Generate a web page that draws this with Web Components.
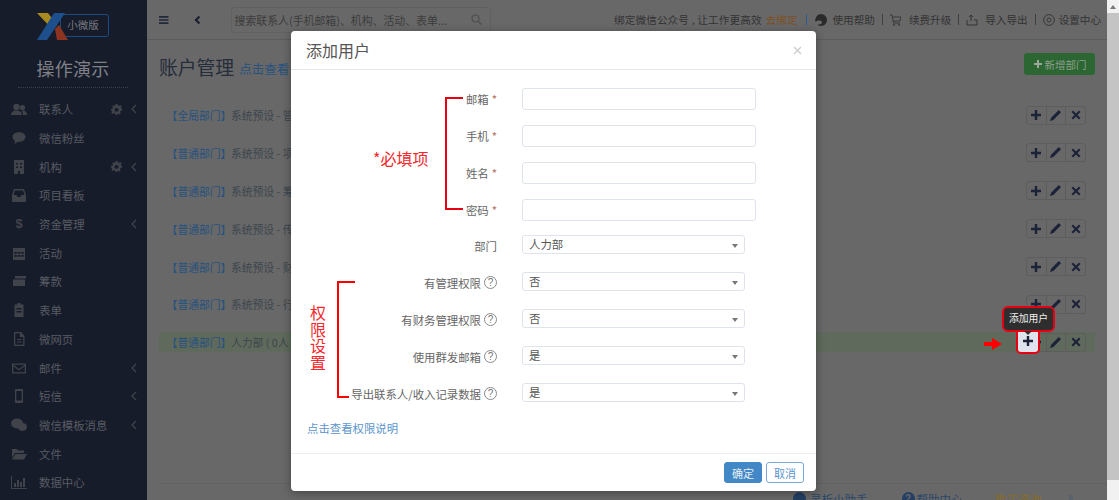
<!DOCTYPE html>
<html lang="zh"><head><meta charset="utf-8"><title>账户管理</title>
<style>
html,body{margin:0;padding:0;height:500px;overflow:hidden;background:#686868;font-family:"Noto Sans CJK SC","Liberation Sans",sans-serif;}
</style></head><body>
<x-app>
  <x-sidebar slot="side">
    <x-nav label="联系人" gear arrow><svg viewBox="0 0 16 16"><circle cx="5.500" cy="6" r="3.200"/><circle cx="11.500" cy="6.500" r="2.600"/><path d="M0 14c0-3 2-4.500 5.500-4.500S11 11 11 14zM12 14c0-2-.5-3.200-1.800-4.200C13.500 9 16 10.500 16 14z"/></svg></x-nav>
    <x-nav label="微信粉丝"><svg viewBox="0 0 16 16"><ellipse cx="8" cy="7" rx="6.500" ry="4.800"/><path d="M4 10 3.500 14l4.500-3z"/></svg></x-nav>
    <x-nav label="机构" gear arrow><svg viewBox="0 0 16 16"><path d="M3 1h10v14H3zM5 4v1.500h2V4zm4 0v1.500h2V4zM5 7.500V9h2V7.500zm4 0V9h2V7.500zM7 12v3h2v-3z" fill-rule="evenodd"/></svg></x-nav>
    <x-nav label="项目看板"><svg viewBox="0 0 16 16"><path d="M3 2h10l2 6v6a1 1 0 0 1-1 1H2a1 1 0 0 1-1-1V8zm1 1.500L2.500 8h3l1 2h3l1-2h3L12 3.500z" fill-rule="evenodd"/></svg></x-nav>
    <x-nav label="资金管理" arrow><span style="font:600 13px 'Liberation Sans';line-height:16px;display:block;text-align:center">$</span></x-nav>
    <x-nav label="活动"><svg viewBox="0 0 16 16"><path d="M2 3h12v12H2zm1.300 4v1.800h2.500V7zm3.400 0v1.800h2.600V7zm3.500 0v1.800h2.500V7zm-6.900 3v1.800h2.500V10zm3.400 0v1.800h2.600V10zm3.500 0v1.800h2.500V10z" fill-rule="evenodd"/></svg></x-nav>
    <x-nav label="筹款"><svg viewBox="0 0 16 16"><path d="M4 3h11v2.500H4zM2 6.500h11a1 1 0 0 1 1 1V13H2z"/></svg></x-nav>
    <x-nav label="表单"><svg viewBox="0 0 16 16"><path d="M3.500 2.500h3V1h3v1.500h3V15h-9zM5.500 6v1.500h5V6zm0 3v1.500h5V9z" fill-rule="evenodd"/></svg></x-nav>
    <x-nav label="微网页"><svg viewBox="0 0 16 16"><path d="M3 1h7l3.500 4v10H3zm1.300 1.300v11.400h7.900V6H9V2.300zM6 8h4.500v1H6zm0 2.500h4.500v1H6z" fill-rule="evenodd"/></svg></x-nav>
    <x-nav label="邮件" arrow><svg viewBox="0 0 16 16"><path d="M1 3.500h14v10H1zm1.300 1.200L8 9l5.700-4.300zm0 1.500v6h11.400v-6L8 10.500z" fill-rule="evenodd"/></svg></x-nav>
    <x-nav label="短信" arrow><svg viewBox="0 0 16 16"><path d="M5 1h6a1 1 0 0 1 1 1v12a1 1 0 0 1-1 1H5a1 1 0 0 1-1-1V2a1 1 0 0 1 1-1zm.300 2v9.500h5.400V3z" fill-rule="evenodd"/></svg></x-nav>
    <x-nav label="微信模板消息" arrow><svg viewBox="0 0 16 16"><ellipse cx="6" cy="6.500" rx="6" ry="5"/><ellipse cx="11.500" cy="10" rx="4.500" ry="4"/></svg></x-nav>
    <x-nav label="文件"><svg viewBox="0 0 16 16"><path d="M1 3h5l1 1.500h6V7H4L1 12zM4.500 8H16l-3 5.500H1z"/></svg></x-nav>
    <x-nav label="数据中心"><svg viewBox="0 0 16 16"><path d="M0 2h1v12h15v1H0zM3 9h2v4H3zm3-3h2v7H6zm3 2h2v5H9zm3-4h2v9h-2z"/></svg></x-nav>
  </x-sidebar>
  <x-topbar slot="top"></x-topbar>
  <x-page slot="main">
    <x-dept kind="全局部门">系统预设 - 管</x-dept>
    <x-dept kind="普通部门">系统预设 - 项</x-dept>
    <x-dept kind="普通部门">系统预设 - 筹</x-dept>
    <x-dept kind="普通部门">系统预设 - 传</x-dept>
    <x-dept kind="普通部门">系统预设 - 财</x-dept>
    <x-dept kind="普通部门">系统预设 - 行</x-dept>
    <x-dept kind="普通部门" active>人力部 ( 0人</x-dept>
  </x-page>
</x-app>
<x-modal heading="添加用户">
  <x-row label="邮箱" req style="--mt:0px"></x-row>
  <x-row label="手机" req style="--mt:15px"></x-row>
  <x-row label="姓名" req style="--mt:15px"></x-row>
  <x-row label="密码" req style="--mt:15px"></x-row>
  <x-row label="部门" value="人力部" style="--mt:14px"></x-row>
  <x-row label="有管理权限" help value="否" style="--mt:18px"></x-row>
  <x-row label="有财务管理权限" help value="否" style="--mt:18px"></x-row>
  <x-row label="使用群发邮箱" help value="是" style="--mt:18px"></x-row>
  <x-row label="导出联系人/收入记录数据" help value="是" style="--mt:18px"></x-row>
</x-modal>
<x-notes></x-notes>
<script>
const def=(n,html)=>{customElements.define(n,class extends HTMLElement{
  constructor(){super();this.attachShadow({mode:'open'}).innerHTML=typeof html==='function'?'':html;}
  connectedCallback(){if(typeof html==='function')this.shadowRoot.innerHTML=html(this);}
});};

def('x-app',`<style>:host{display:grid;grid-template-columns:147px 960px 12px;grid-template-rows:40px 460px;height:500px;overflow:hidden}
.s{grid-row:1/3;grid-column:1;display:block;background:#171c2b}
.t{grid-column:2;grid-row:1}.m{grid-column:2;grid-row:2;overflow:hidden;display:block}
.bar{grid-column:3;grid-row:1/3;background:#f1f1f1;display:flex;flex-direction:column}
.up{height:13px;display:flex;align-items:center;justify-content:center}
.up i{border:3px solid transparent;border-bottom:4px solid #777;border-top:0;display:block}
.th{height:467px;background:#c4c4c4}
</style><div class="s"><slot name="side"></slot></div><div class="t"><slot name="top"></slot></div><div class="m"><slot name="main"></slot></div>
<div class="bar"><div class="up"><i></i></div><div class="th"></div></div>`);

def('x-sidebar',`<style>:host{display:block;color:#585b62}
.logo{margin:12px 0 0 36px;height:29px;width:73px;position:relative;display:flex;justify-content:flex-end}
svg{position:absolute;left:0;top:0}
.ver{margin-top:2px;width:49px;height:23px;box-sizing:border-box;border:1.500px solid #1c4a83;border-radius:3px;color:#77797f;font-size:10.500px;line-height:20px;text-align:center;padding-right:3px}
h1{margin:15px 0 0 -1px;font-weight:400;font-size:18px;line-height:24px;color:#7f8186;text-align:center;letter-spacing:.3px}
.hr{margin:7px 19px 0 18px;border-top:1px dotted #3c404b}
.nav{margin-top:7px;display:block}
</style><div class="logo"><svg width="74" height="29" viewBox="0 0 74 29"><path d="M1 1h11l9 12-4 5z" fill="#a98a1e"/><path d="M19 17l4-4 9 15H21z" fill="#8c3420"/><path d="M18 1h11L11 28H1z" fill="#1c4f8c"/></svg><div class="ver">小微版</div></div>
<h1>操作演示</h1><div class="hr"></div><div class="nav"><slot></slot></div>`);

def('x-nav',h=>`<style>:host{display:flex;align-items:center;height:28.700px;font-size:11.400px;position:relative}
.i{width:16px;height:16px;margin-left:11px;margin-right:12px;color:#404349;flex:none}
::slotted(svg){width:16px;height:16px;display:block;fill:#404349}
.l{flex:1;white-space:nowrap}
.g{width:11px;height:11px;fill:#404349;margin-right:6px}
.a{width:12px;height:10px;fill:none;stroke:#404349;stroke-width:1.300;margin-right:7px}
</style><div class="i"><slot></slot></div><span class="l">${h.getAttribute('label')}</span>
${h.hasAttribute('gear')?`<svg class="g" viewBox="0 0 16 16"><path d="M6.500 0h3l.5 2.300 1.500.7 2-1.200 2 2.100-1.200 2 .6 1.500L16 8v3l-2.300.5-.6 1.500 1.200 2-2.100 2-2-1.200-1.500.6L9.500 18h-3L6 15.700l-1.500-.6-2 1.200-2-2 1.200-2L1.100 11 0 11V8l2.300-.5.6-1.500-1.200-2 2-2.100 2 1.200L6 2.300zM8 6.500a3 3 0 1 0 0 6 3 3 0 0 0 0-6z" fill-rule="evenodd" transform="scale(1 .89)"/></svg>`:''}
${h.hasAttribute('arrow')?`<svg class="a" viewBox="0 0 12 10"><path d="M8 1 4 5l4 4"/></svg>`:''}`);

def('x-topbar',`<style>:host{display:flex;align-items:center;height:40px;box-sizing:border-box;border-bottom:1px solid #5c5c5c;font-size:10.600px;color:#333;white-space:nowrap}
svg{flex:none;display:block}
.search{margin-left:30px;width:260px;height:26px;box-sizing:border-box;border:1px solid #606060;border-radius:3px;display:flex;align-items:center;padding:0 8px 0 3px;color:#3c3c3c;font-size:10.900px;justify-content:space-between}
.r{margin-left:auto;margin-right:6px;display:flex;align-items:center}
.o{color:#7d4f22;margin-left:4px}
.s{margin:0 7px;width:1px;height:11px;background:#3f3f3f}
.s.b{background:#2a5c8c;margin:0 8px}
.ic{margin-right:6px}
.c{letter-spacing:.15px}
</style>
<svg style="margin-left:12px" width="9.500" height="8" viewBox="0 0 11 9" fill="#23283a"><path d="M0 0h11v1.800H0zm0 3.600h11v1.800H0zm0 3.600h11V9H0z"/></svg>
<svg style="margin-left:25px" width="7" height="10" viewBox="0 0 9 11" fill="none" stroke="#1a1f30" stroke-width="2.800"><path d="M7 1 2.500 5.500 7 10"/></svg>
<div class="search"><span>搜索联系人(手机邮箱)、机构、活动、表单...</span><svg width="11" height="11" viewBox="0 0 11 11" fill="none" stroke="#4f4f4f" stroke-width="1.200"><circle cx="4.500" cy="4.500" r="3.500"/><path d="M7 7l3.500 3.500"/></svg></div>
<div class="r"><span class="c">绑定微信公众号 , 让工作更高效</span><span class="o">去绑定</span><i class="s b"></i>
<svg class="ic" width="12" height="12" viewBox="0 0 12 12" fill="#2a2a2a"><path d="M6 0a6 6 0 0 1 6 6c0 3-2.500 6-6 6-2 0-3-1-3-2 1 .5 2 .5 3 0 1.500-.8 1.500-3-.5-3.500-2-.3-4 .5-5.500 1C.5 3 2.500 0 6 0z"/></svg><span>使用帮助</span><i class="s"></i>
<svg class="ic" style="margin-right:8px" width="11" height="12" viewBox="0 0 11 12" fill="none" stroke="#333" stroke-width=".9"><path d="M0 1h2l1.500 8H10M3 3h8l-1 4H3.500"/><circle cx="4" cy="10.800" r=".6"/><circle cx="9" cy="10.800" r=".6"/></svg><span>续费升级</span><i class="s"></i>
<svg class="ic" style="margin-right:7px" width="12" height="12" viewBox="0 0 12 12" fill="none" stroke="#333" stroke-width="1"><path d="M1 6v5h10V6H8M5 1 3 3M5 1l2 2M5 1v6"/></svg><span>导入导出</span><i class="s"></i>
<svg class="ic" style="margin-right:4px" width="12" height="12" viewBox="0 0 12 12" fill="none" stroke="#333" stroke-width=".9"><circle cx="6" cy="6" r="5.400"/><circle cx="6" cy="6" r="2"/></svg><span>设置中心</span></div>`);

def('x-page',`<style>:host{display:flex;flex-direction:column;padding:0 12px;height:460px;box-sizing:border-box;position:relative}
.head{height:65px;display:flex;align-items:flex-start;flex:none}
h2{margin:13px 0 0;font-weight:400;font-size:18.800px;line-height:27px;color:#252c3a}
a{margin:20px 0 0 5px;color:#27527f;font-size:12.500px;line-height:18px}
.add{margin:13px 0 0 auto;width:71px;height:22px;border-radius:3px;background:#2c6733;color:#8c9e8d;font-size:10.500px;display:flex;align-items:center;justify-content:center;gap:2px}
.foot{margin-top:auto;height:17px;border-top:1px solid #626262;display:flex;font-size:11.500px;line-height:30px;color:#2a4668;align-items:flex-start;box-sizing:border-box;padding-left:634px;white-space:nowrap;margin-right:-12px}
.foot i{display:block;width:13px;height:13px;border-radius:50%;background:#243f63;margin:8px 4px 0 0;flex:none;font:700 10px/13px "Liberation Sans";color:#686868;text-align:center}
.foot span{margin-right:34px}.foot .h{margin-right:33px;margin-left:-2px}.foot .g{color:#8a6c25;margin-right:27px}.foot b{width:4px;height:8px;background:#5a6270;margin-top:11px}
.list{display:flex;flex-direction:column;gap:17.900px}
</style><div class="head"><h2>账户管理</h2><a>点击查看</a><div class="add"><svg width="10" height="10" viewBox="0 0 10 10" fill="#9aa89b"><path d="M4 1h2v3h3v2H6v3H4V6H1V4h3z"/></svg>新增部门</div></div>
<div class="list"><slot></slot></div>
<div class="foot"><i></i><span>灵析小助手</span><i>?</i><span class="h">帮助中心</span><span class="g">购买咨询</span><b></b></div>`);

const P='M3.800 0h2.400v3.800H10v2.400H6.200V10H3.800V6.200H0V3.800h3.800z';
def('x-dept',h=>`<style>:host{display:flex;align-items:center;height:20px;font-size:10.800px;color:#3c464e;padding:0 9px 0 13px;white-space:nowrap;${h.hasAttribute('active')?'background:#5f6a5c;':''}}
b{font-weight:400;color:#27527f;font-feature-settings:"halt";margin-right:5px}
.g{margin-left:auto;display:flex}
.g div{width:20.700px;height:19px;box-sizing:border-box;border:1px solid #5d5d5d;display:flex;align-items:center;justify-content:center;margin-left:-1px}
.g div:first-child{border-radius:3px 0 0 3px}.g div:last-child{border-radius:0 3px 3px 0}
svg{display:block}
</style><b>【${h.getAttribute('kind')}】</b><span><slot></slot></span>
<div class="g"><div><svg width="10" height="10" viewBox="0 0 10 10" fill="#1c2238"><path d="${P}"/></svg></div><div><svg width="11" height="11" viewBox="0 0 10 10" fill="#1c2238"><path d="M8 0 10 2 3 9 0 10 1 7z"/></svg></div><div><svg width="10" height="10" viewBox="0 0 10 10" fill="#1c2238"><path d="M2 .5l3 3 3-3L9.500 2l-3 3 3 3L8 9.500l-3-3-3 3L.5 8l3-3-3-3z"/></svg></div></div>`);

def('x-modal',h=>`<style>:host{position:absolute;left:291px;top:31px;width:525px;height:460px;background:#fff;border-radius:4px;box-shadow:0 2px 10px rgba(0,0,0,.35);display:flex;flex-direction:column;color:#666;z-index:2}
header{height:39px;box-sizing:border-box;border-bottom:1px solid #e5e7ee;display:flex;align-items:center;justify-content:space-between;padding:0 14px 0 15px;flex:none}
h3{margin:0;font-weight:400;font-size:16px;line-height:22px;color:#555}
.x{width:9px;height:9px;stroke:#ccc;stroke-width:1.300;fill:none}
.body{flex:1;display:flex;flex-direction:column;padding-top:18px}
.link{margin:18px 0 0 16px;font-size:11.400px;line-height:16px;color:#5b94cc}
footer{height:38px;box-sizing:border-box;border-top:1px solid #eee;display:flex;justify-content:flex-end;align-items:flex-start;padding:8px 12px 0 0;gap:4px;flex:none}
button{font:11px "Noto Sans CJK SC",sans-serif;width:38px;height:21px;border-radius:3px;padding:0;border:1px solid #4288c6;background:#4288c6;color:#e8eef5}
button+button{background:#fff;color:#5b94cc;border-color:#7aa8d4}
</style><header><h3>${h.getAttribute('heading')}</h3><svg class="x" viewBox="0 0 9 9"><path d="M1 1l7 7M8 1 1 8"/></svg></header>
<div class="body"><slot></slot><div class="link">点击查看权限说明</div></div>
<footer><button>确定</button><button>取消</button></footer>`);

def('x-row',h=>{const sel=h.hasAttribute('value');return `<style>:host{display:flex;align-items:center;margin-top:var(--mt,0);height:${sel?19:22}px;font-size:11.400px;color:#666;white-space:nowrap}
.l{width:206px;flex:none;text-align:right;display:flex;justify-content:flex-end;align-items:center;${sel?'padding-top:2px;':''}box-sizing:border-box}
.s{color:#b07060;margin-left:3px}
.h{margin-left:3px;width:13px;height:13px;display:block;box-sizing:border-box;border:1.200px solid #8a8a8a;border-radius:50%;font:10px/11px "Liberation Sans";text-align:center;color:#777}
.f{margin-left:25px;box-sizing:border-box;height:100%;border:1px solid #dfe3ec;border-radius:3px;background:#fff}
.in{width:234px}
.sel{width:223px;display:flex;align-items:center;justify-content:space-between;padding:0 6px 1px 6px;color:#555;font-size:11.400px}
.sel i{border:3px solid transparent;border-top:4px solid #777;border-bottom:0;display:block;margin-top:3px}
</style><div class="l"><span>${h.getAttribute('label')}</span>${h.hasAttribute('req')?'<span class="s">*</span>':''}${h.hasAttribute('help')?'<span class="h">?</span>':''}</div>
${sel?`<div class="f sel"><span>${h.getAttribute('value')}</span><i></i></div>`:`<div class="f in"></div>`}`;});

def('x-notes',`<style>:host{position:absolute;inset:0;z-index:3;pointer-events:none;display:block;color:#f5282e;font-size:16px;line-height:20px}
div{position:absolute;box-sizing:border-box}
.b1{left:445px;top:97px;width:18px;height:113px;border:2px solid #e60012;border-right:0}
.b2{left:337px;top:281px;width:18px;height:117px;border-left:2px solid #f00;border-top:2px solid #f00}
.b2b{left:337px;top:396px;width:12px;height:2px;background:#f00}
.t1{left:373px;top:148px;white-space:nowrap}
.t2{left:310px;top:304px;width:16px;line-height:16.500px}
.tip{left:1002px;top:306px;width:53px;height:26px;border:2.500px solid #e60012;border-radius:6px;background:#2e2e2e;color:#eee;font-size:9.800px;line-height:21px;text-align:center}
.btn{left:1016px;top:329px;width:24px;height:25px;border:2.500px solid #e60012;border-top:0;border-radius:0 0 5px 5px;background:#dfe3ee;display:flex;align-items:center;justify-content:center}
.caret{left:1024px;top:331px;border:4px solid transparent;border-top:4px solid #2e2e2e;border-bottom:0;z-index:1}
svg{display:block}
.arrow{left:984px;top:338px}
</style>
<div class="b1"></div><div class="b2"></div><div class="b2b"></div>
<div class="t1">*必填项</div><div class="t2">权限设置</div>
<div class="btn"><svg width="10" height="10" viewBox="0 0 10 10" fill="#1c2238"><path d="${P}"/></svg></div>
<div class="tip">添加用户</div><div class="caret"></div>
<div class="arrow"><svg width="18" height="12" viewBox="0 0 18 12" fill="#f00"><path d="M0 4h8V0l10 6-10 6V8H0z"/></svg></div>`);
</script>
</body></html>
